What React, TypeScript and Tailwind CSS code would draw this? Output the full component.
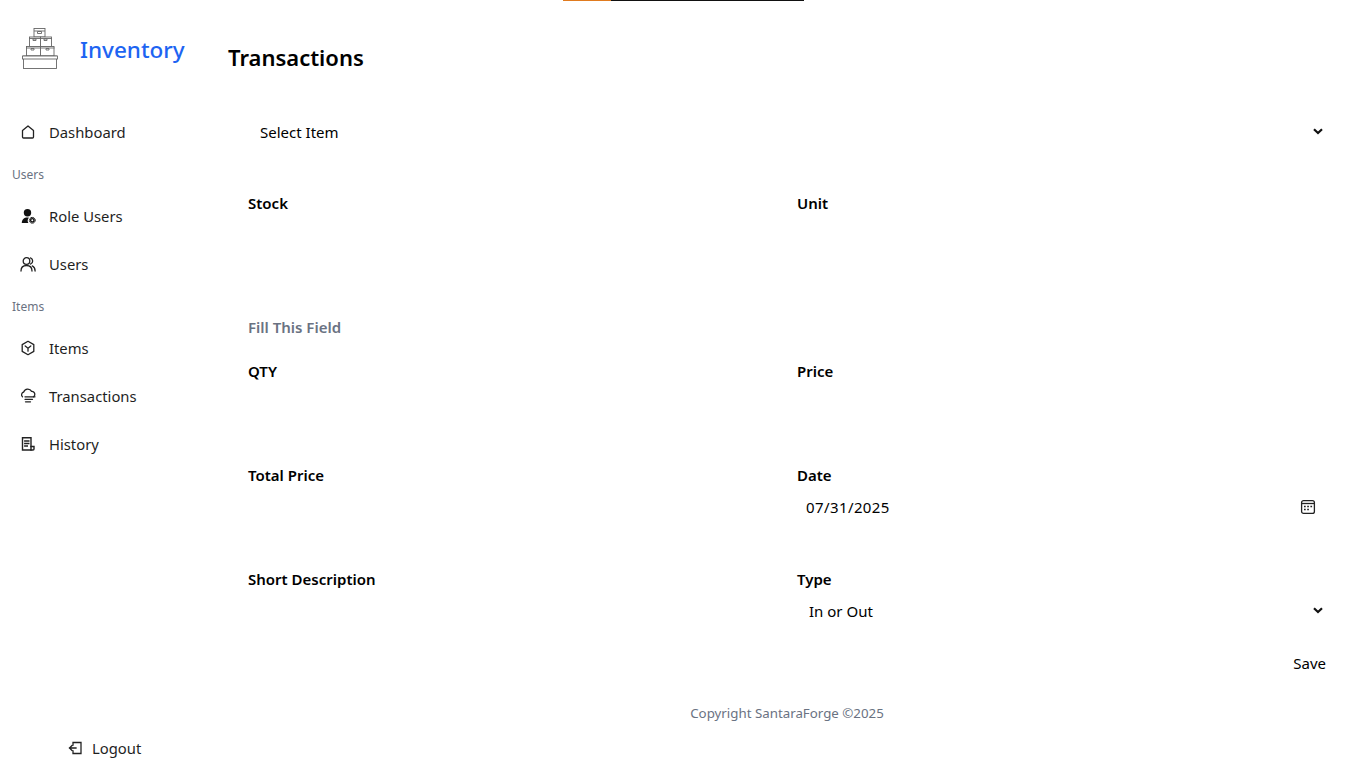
const font = "font-['Noto_Sans','Open_Sans',sans-serif]";

function Logo() {
  return (
    <svg width="38" height="44" viewBox="0 0 38 44" fill="white" stroke="#666" strokeWidth="0.9">
      <rect x="13" y="1.500" width="11" height="8.500" />
      <path d="M13 4h11M16.500 4.500h4v2h-4z" />
      <rect x="8.500" y="10" width="11" height="9.500" />
      <rect x="19.500" y="10" width="11" height="9.500" />
      <path d="M8 11.500h23M12 12h3v1.500h-3zM23 12h3v1.500h-3z" />
      <rect x="5.500" y="19.500" width="14" height="9.500" />
      <rect x="19.500" y="19.500" width="13.500" height="9.500" />
      <path d="M5 21h28.500M10 21.500h3v1.500h-3zM25 21.500h3v1.500h-3z" />
      <rect x="2.500" y="29" width="33" height="12.500" />
      <rect x="1.500" y="29" width="35" height="3" />
    </svg>
  );
}

const iconProps = {
  width: 16,
  height: 16,
  viewBox: "0 0 16 16",
  fill: "none",
  stroke: "#222",
  strokeWidth: 1.3,
  strokeLinecap: "round" as const,
  strokeLinejoin: "round" as const,
};

const HomeIcon = () => (
  <svg {...iconProps}>
    <path d="M2.500 6.600 8 2l5.500 4.600V13a1 1 0 0 1-1 1h-9a1 1 0 0 1-1-1z" />
  </svg>
);

const RoleIcon = () => (
  <svg {...iconProps} stroke="none" fill="#111">
    <circle cx="7.500" cy="4.800" r="3.700" />
    <path d="M1.800 15c0-3.500 2.200-5.500 5.700-5.500.5 0 1 0 1.400.2A4.500 4.500 0 0 0 8.400 15z" />
    <circle cx="12.300" cy="12.300" r="1.700" fill="none" stroke="#111" strokeWidth="1.400" />
    <circle cx="12.300" cy="12.300" r="2.900" fill="none" stroke="#111" strokeWidth="1" strokeDasharray="1.200 1.080" />
  </svg>
);

const UsersIcon = () => (
  <svg {...iconProps}>
    <circle cx="6.500" cy="5" r="3.300" />
    <path d="M1 15c0-3.400 2.200-5.500 5.500-5.500S12 11.600 12 15M10.500 1.900a3.300 3.300 0 0 1 0 6.200M12.300 9.900c1.800.8 2.800 2.600 2.800 5.100" />
  </svg>
);

const ItemsIcon = () => (
  <svg {...iconProps}>
    <path d="M8 1.300 13.800 4.600v6.800L8 14.700 2.200 11.400V4.600z" />
    <path d="M5.200 6 8 8.200 10.800 6M8 8.200v3" />
  </svg>
);

const TransactionsIcon = () => (
  <svg {...iconProps}>
    <path d="M2.500 8.800A2.800 2.800 0 0 1 3.700 4 4.300 4.300 0 0 1 11.600 3.400 2.900 2.900 0 0 1 14.800 6.500a2.800 2.800 0 0 1-1.300 2.300" />
    <path d="M5 8.800h10M5 11.300h7.500M5.500 13.800h5" />
  </svg>
);

const HistoryIcon = () => (
  <svg {...iconProps} strokeLinecap="square" strokeLinejoin="miter" strokeWidth={1.4}>
    <path d="M11 14h-8.500V1.700H11V14zM4.800 5h4M4.800 7.500h4M4.800 10h2.500" />
    <path d="M11 10.500h3V13a1 1 0 0 1-1 1h-2" />
  </svg>
);

const LogoutIcon = () => (
  <svg {...iconProps} strokeLinecap="square" strokeLinejoin="miter">
    <path d="M5 5V2.500h8v11H5V11M1.500 8h6.500M3.800 5.700 1.500 8l2.300 2.300" />
  </svg>
);

const CalendarIcon = () => (
  <svg width="16" height="16" viewBox="0 0 16 16" fill="none" stroke="#222" strokeWidth="1.300">
    <rect x="1.600" y="1.600" width="12.800" height="12.800" rx="2" />
    <path d="M1.600 4.500h12.800" />
    <path strokeWidth="1.600" d="M4 7.500h1.700M7.200 7.500h1.700M10.400 7.500h1.700M4 10.500h1.700M7.200 10.500h1.700" />
  </svg>
);

const Chevron = () => (
  <svg className="mb-0.5" width="10" height="7" viewBox="0 0 10 7" fill="none" stroke="#111" strokeWidth="2.200">
    <path d="M1 1.200 5 5l4-3.800" />
  </svg>
);

function NavItem({ icon, label }: { icon: React.ReactNode; label: string }) {
  return (
    <div className="flex h-12 items-center gap-[13px] pl-5 text-[14.8px] text-[#1f1f1f]">
      {icon}
      <span>{label}</span>
    </div>
  );
}

function NavTitle({ label }: { label: string }) {
  return <div className="flex h-9 items-center pt-0.5 pl-3 text-xs text-gray-500">{label}</div>;
}

function Field({ label, children }: { label: string; children?: React.ReactNode }) {
  return (
    <div className="h-[104px]">
      <div className="h-6 text-[15px] leading-6 font-semibold text-black">{label}</div>
      {children}
    </div>
  );
}

export default function App() {
  return (
    <div className={`${font} relative flex h-screen overflow-hidden bg-white text-black`}>
      {/* page loading bar */}
      <div className="absolute top-0 left-[563px] flex h-px">
        <div className="h-px w-12 bg-[#e07b1f]" />
        <div className="h-px w-[193px] bg-[#111]" />
      </div>

      <aside className="flex h-full w-[228px] shrink-0 flex-col">
        <div className="flex h-[108px] items-start pt-[27px] pl-[21px]">
          <Logo />
          <span className="mt-[7px] ml-[21px] text-[22.5px] leading-8 font-medium text-[#1d64f2]">Inventory</span>
        </div>
        <NavItem icon={<HomeIcon />} label="Dashboard" />
        <NavTitle label="Users" />
        <NavItem icon={<RoleIcon />} label="Role Users" />
        <NavItem icon={<UsersIcon />} label="Users" />
        <NavTitle label="Items" />
        <NavItem icon={<ItemsIcon />} label="Items" />
        <NavItem icon={<TransactionsIcon />} label="Transactions" />
        <NavItem icon={<HistoryIcon />} label="History" />
        <div className="mt-auto mb-2 flex h-6 items-center gap-2 pl-[68px] text-[14.8px] text-[#1f1f1f]">
          <LogoutIcon />
          <span>Logout</span>
        </div>
      </aside>

      <main className="flex-1 pt-[41px] pr-10">
        <h1 className="text-[22px] leading-8 font-semibold">Transactions</h1>
        <div className="mt-[35px] pl-5">
          <div className="flex h-12 items-center justify-between pr-[3px] pl-3 text-[15px]">
            <span>Select Item</span>
            <Chevron />
          </div>
          <div className="mt-[35px] grid h-[124px] grid-cols-2 gap-x-5">
            <Field label="Stock" />
            <Field label="Unit" />
          </div>
          <div className="h-11 text-[15px] leading-6 font-semibold text-gray-500">Fill This Field</div>
          <div className="grid grid-cols-2 gap-x-5">
            <Field label="QTY" />
            <Field label="Price" />
            <Field label="Total Price" />
            <Field label="Date">
              <div className="flex h-10 items-center justify-between pr-[10px] pl-[9px] text-[15px] tracking-[0.4px]">
                <span>07/31/2025</span>
                <CalendarIcon />
              </div>
            </Field>
            <div className="h-[84px]">
              <div className="h-6 text-[15px] leading-6 font-semibold">Short Description</div>
            </div>
            <div className="h-[84px]">
              <div className="h-6 text-[15px] leading-6 font-semibold">Type</div>
              <div className="flex h-10 items-center justify-between pr-[3px] pl-3 text-[15px]">
                <span>In or Out</span>
                <Chevron />
              </div>
            </div>
          </div>
          <div className="flex h-6 items-center justify-end text-[15px]">Save</div>
          <div className="mt-[26px] h-6 text-center text-[13.3px] leading-6 text-gray-500">Copyright SantaraForge ©2025</div>
        </div>
      </main>
    </div>
  );
}
